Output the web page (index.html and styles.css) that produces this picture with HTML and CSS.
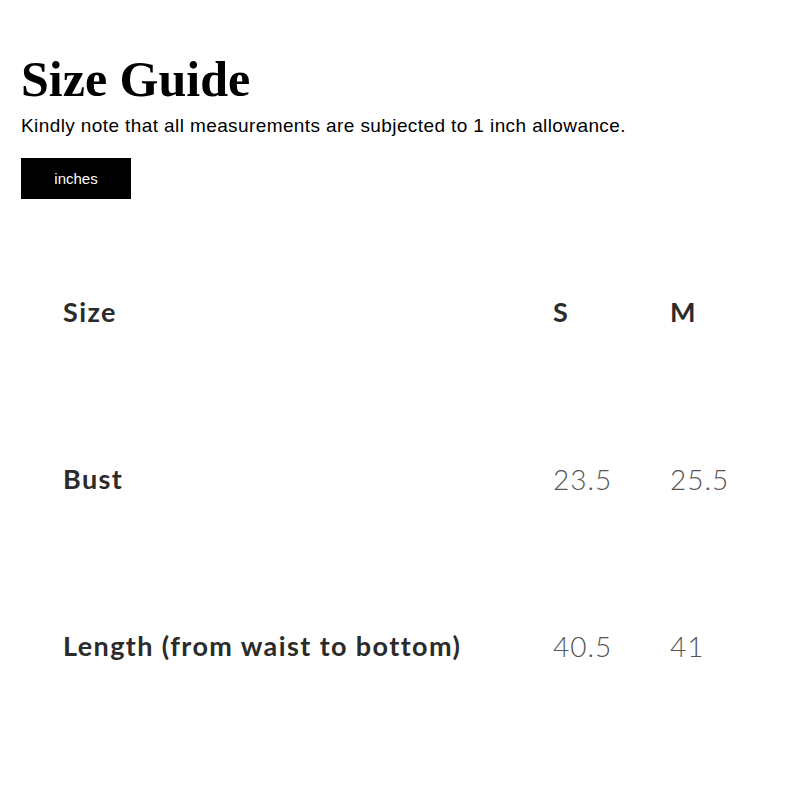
FILE: index.html
```html
<!DOCTYPE html>
<html>
<head>
<meta charset="utf-8">
<link rel="stylesheet" href="styles.css">
</head>
<body>
<div class="page">
  <h1 class="title">Size Guide</h1>
  <p class="note">Kindly note that all measurements are subjected to 1 inch allowance.</p>
  <button class="unit-btn">inches</button>
  <div class="size-table">
    <div class="row">
      <div class="label">Size</div>
      <div class="cell head">S</div>
      <div class="cell head">M</div>
    </div>
    <div class="row">
      <div class="label">Bust</div>
      <div class="cell">23.5</div>
      <div class="cell">25.5</div>
    </div>
    <div class="row">
      <div class="label">Length (from waist to bottom)</div>
      <div class="cell">40.5</div>
      <div class="cell">41</div>
    </div>
  </div>
</div>
</body>
</html>
```

FILE: styles.css
```css
html, body {
  margin: 0;
  padding: 0;
  background: #fff;
}
.page {
  padding: 49px 22px 0 21px;
}
.title {
  font-family: "Liberation Serif", "Times New Roman", serif;
  font-weight: bold;
  font-size: 50px;
  line-height: 60px;
  margin: 0;
  color: #000;
}
.note {
  font-family: "Liberation Sans", Arial, sans-serif;
  font-size: 19px;
  line-height: 22px;
  letter-spacing: 0.4px;
  margin: 6px 0 21px 0;
  color: #000;
}
.unit-btn {
  display: block;
  width: 110px;
  height: 41px;
  background: #000;
  color: #fff;
  border: none;
  font-family: "Liberation Sans", Arial, sans-serif;
  font-size: 15px;
  padding: 0;
}
.size-table {
  margin-top: 98px;
  padding-left: 42px;
}
.row {
  display: grid;
  grid-template-columns: 490px 117px 100px;
  height: 167px;
  align-items: start;
}
.label {
  font-family: Lato, "Noto Sans", sans-serif;
  font-weight: bold;
  font-size: 27px;
  line-height: 30px;
  letter-spacing: 1.4px;
  color: #2b2b2b;
}
.cell {
  font-family: Lato, "Noto Sans", sans-serif;
  font-weight: 300;
  font-size: 28px;
  line-height: 30px;
  letter-spacing: 1px;
  color: #555;
}
.cell.head {
  font-weight: bold;
  font-size: 27px;
  letter-spacing: 0;
  color: #2b2b2b;
}
```
